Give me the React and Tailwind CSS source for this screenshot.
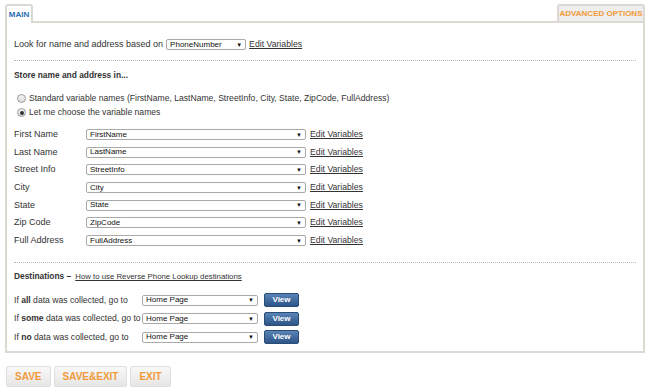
import React from "react";

const fields = [
  { label: "First Name", value: "FirstName" },
  { label: "Last Name", value: "LastName" },
  { label: "Street Info", value: "StreetInfo" },
  { label: "City", value: "City" },
  { label: "State", value: "State" },
  { label: "Zip Code", value: "ZipCode" },
  { label: "Full Address", value: "FullAddress" },
];

const destinations = [
  { pre: "If ", bold: "all", post: " data was collected, go to" },
  { pre: "If ", bold: "some", post: " data was collected, go to" },
  { pre: "If ", bold: "no", post: " data was collected, go to" },
];

const FakeSelect = ({ value, className }) => (
  <div
    className={`flex h-[11px] items-center justify-between rounded-[2px] border border-[#a9a9a9] bg-white pl-[3px] pr-[3px] text-[8px] leading-none text-[#111] ${className}`}
  >
    <span>{value}</span>
    <span className="text-[6px]">▼</span>
  </div>
);

const EditLink = () => (
  <a className="text-[8.7px] leading-[11px] text-[#333] underline">Edit Variables</a>
);

const Radio = ({ checked }) => (
  <span className="flex h-[9px] w-[9px] items-center justify-center rounded-full border border-[#9a9a9a] bg-gradient-to-b from-[#f4f4f4] to-[#dcdcdc]">
    {checked && <span className="h-[4px] w-[4px] rounded-full bg-[#333]" />}
  </span>
);

export default function App() {
  return (
    <div className="h-[391px] w-[650px] bg-white font-['Liberation_Sans',Arial,sans-serif] text-[9px] leading-[11px] text-[#333]">
      <div className="px-[5px] pt-[4px]">
        {/* tabs */}
        <div className="flex items-end justify-between">
          <div className="relative z-10 -mb-[2px] flex h-[19px] w-[28px] items-center justify-center rounded-t-[3px] border-2 border-b-0 border-[#dcd9d2] bg-white">
            <span className="text-[8px] font-bold text-[#2a6db5]">MAIN</span>
          </div>
          <div className="flex h-[17px] w-[88px] items-center justify-center rounded-t-[3px] border-2 border-b-0 border-[#dcd9d2] bg-[#eeeeee]">
            <span className="text-[8px] font-bold text-[#f29a3a]">ADVANCED OPTIONS</span>
          </div>
        </div>

        {/* panel */}
        <div className="h-[332px] border-2 border-[#dcd9d2] px-[7px] pt-[16px]">
          <div className="flex h-[11px] items-center gap-[3px]">
            <span>Look for name and address based on</span>
            <FakeSelect value="PhoneNumber" className="w-[80px]" />
            <EditLink />
          </div>

          <div className="mt-[10px] border-t border-dotted border-[#b8b8b8]" />

          <div className="mt-[9px] text-[8.4px] font-bold">Store name and address in...</div>

          <div className="mt-[12px] flex flex-col gap-[3px] pl-[3px] text-[8.6px]">
            <label className="flex h-[11px] items-center gap-[3px]">
              <Radio />
              <span>Standard variable names (FirstName, LastName, StreetInfo, City, State, ZipCode, FullAddress)</span>
            </label>
            <label className="flex h-[11px] items-center gap-[3px]">
              <Radio checked />
              <span>Let me choose the variable names</span>
            </label>
          </div>

          <div className="mt-[11px] flex flex-col gap-[6.7px]">
            {fields.map((f) => (
              <div key={f.label} className="flex h-[11px] items-center">
                <span className="w-[72px]">{f.label}</span>
                <FakeSelect value={f.value} className="w-[220px]" />
                <span className="ml-[4px] flex">
                  <EditLink />
                </span>
              </div>
            ))}
          </div>

          <div className="mt-[16px] border-t border-dotted border-[#b8b8b8]" />

          <div className="mt-[8px] flex h-[11px] items-center gap-[4px]">
            <span className="text-[8.4px] font-bold">Destinations –</span>
            <a className="text-[7.8px] text-[#333] underline">How to use Reverse Phone Lookup destinations</a>
          </div>

          <div className="mt-[11px] flex flex-col gap-[4.5px]">
            {destinations.map((d) => (
              <div key={d.bold} className="flex h-[14px] items-center">
                <span className="w-[128px] whitespace-nowrap text-[8.6px]">
                  {d.pre}
                  <b>{d.bold}</b>
                  {d.post}
                </span>
                <FakeSelect value="Home Page" className="w-[116px]" />
                <button className="ml-[6px] flex h-[14px] w-[35px] items-center justify-center rounded-[2px] border border-[#2a4d78] bg-gradient-to-b from-[#5b84b6] to-[#2d5588] text-[8px] font-bold leading-none text-white">
                  View
                </button>
              </div>
            ))}
          </div>
        </div>

        {/* bottom buttons */}
        <div className="mt-[13px] flex gap-[3px] pl-[1px]">
          {["SAVE", "SAVE&EXIT", "EXIT"].map((t) => (
            <button
              key={t}
              className="h-[21px] rounded-[2px] border border-[#dedede] bg-gradient-to-b from-[#f8f8f8] to-[#e6e6e6] px-[8px] text-[10px] font-bold leading-none text-[#f29a3a]"
            >
              {t}
            </button>
          ))}
        </div>
      </div>
    </div>
  );
}
